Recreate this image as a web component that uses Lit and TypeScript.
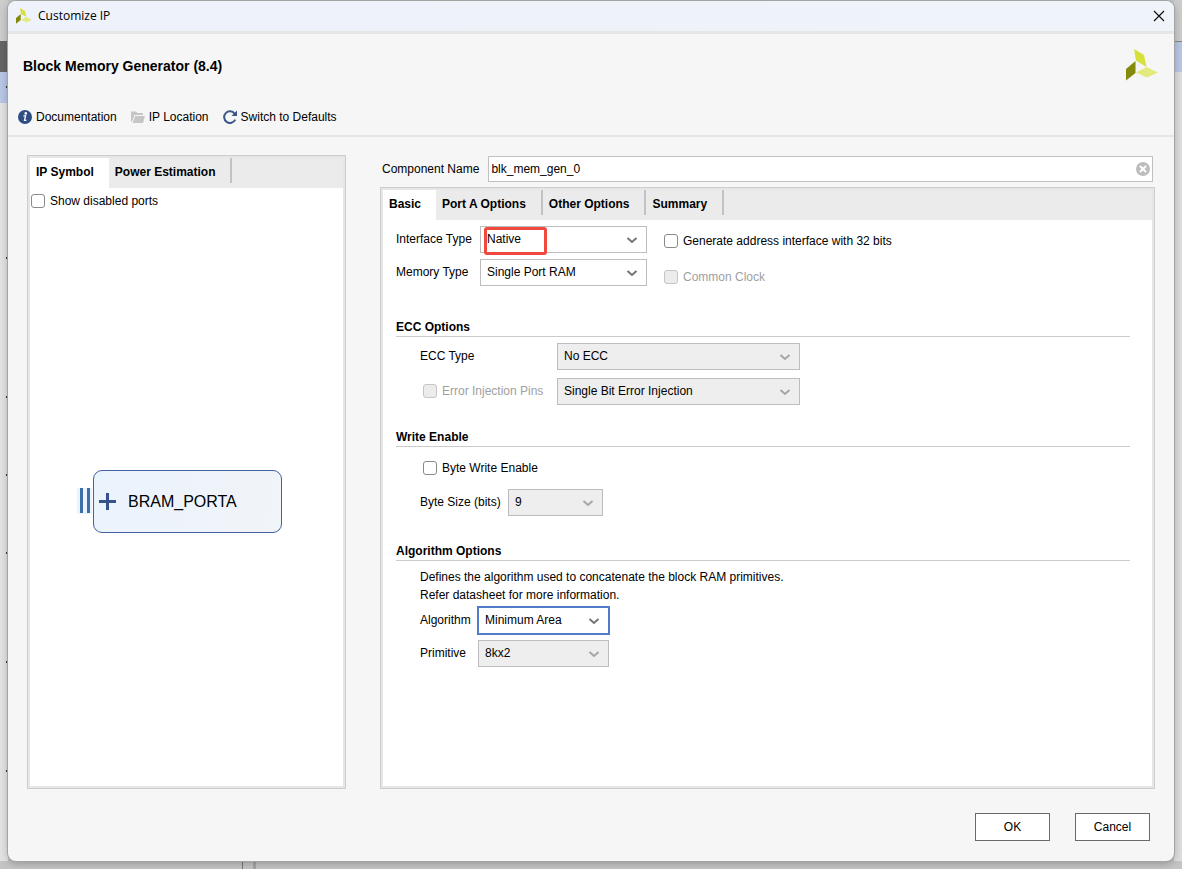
import { LitElement, html, css, nothing } from "lit";
import { customElement, property } from "lit/decorators.js";

const logo = html`<svg class="logo" viewBox="0 0 32 32" aria-hidden="true">
  <path fill="#d5e03a" d="M8 0 L18 6 L20.5 18 L10 11.5 Z" />
  <path fill="#868a0c" d="M0 20 L9.5 12 V24 L0 31.5 Z" />
  <path fill="#e3ea7c" d="M10 23.5 L20.5 18 L32 23.5 L21 28.5 Z" />
</svg>`;

@customElement("x-select")
class XSelect extends LitElement {
  @property() value = "";
  @property() label = "";
  @property({ type: Boolean }) disabled = false;
  @property({ type: Boolean, reflect: true }) active = false;
  @property({ type: Boolean }) marked = false;

  static styles = css`
    :host { display: grid; position: relative; height: 27px; }
    select {
      grid-area: 1 / 1; appearance: none; box-sizing: border-box; width: 100%; height: 27px;
      margin: 0; padding: 0 28px 2px 6px; border: 1px solid #bdbdbd; border-radius: 0;
      background: #fff; color: #000; font: 12px "Liberation Sans", Arial, sans-serif; opacity: 1;
    }
    select:disabled { background: #eee; }
    :host([active]) select { border-color: #4f7dcb; box-shadow: 0 0 0 1px #4f7dcb; }
    svg {
      grid-area: 1 / 1; justify-self: end; align-self: center; width: 12px; height: 8px;
      margin-right: 9px; fill: none; stroke: #757575; stroke-width: 2; pointer-events: none;
    }
    .off { stroke: #a6a6a6; }
    .mark {
      position: absolute; left: 4px; top: 1px; width: 63px; height: 28px; box-sizing: border-box;
      border: 3px solid #f0493e; border-radius: 3px; pointer-events: none;
    }
  `;

  render() {
    return html`
      <select aria-label=${this.label} ?disabled=${this.disabled}><option>${this.value}</option></select>
      <svg class=${this.disabled ? "off" : ""} viewBox="0 0 12 8"><path d="M1.5 2 L6 6 L10.5 2" /></svg>
      ${this.marked ? html`<span class="mark"></span>` : nothing}
    `;
  }
}

@customElement("app-root")
class AppRoot extends LitElement {
  static styles = css`
    :host {
      display: flex; box-sizing: border-box; min-height: 100vh; padding: 1px 8px 8px; overflow: hidden;
      position: relative; background: #c4c4c4; color: #000;
      font: 12px/16px "Liberation Sans", Arial, sans-serif;
    }
    h1, h2, p { margin: 0; }
    button { font: inherit; color: inherit; padding: 0; border: 0; background: none; }
    .edge { position: absolute; top: 0; bottom: 8px; width: 8px; }
    .edge.left { left: 0; background: linear-gradient(#cdcdcd 41px, #666 41px 72px, #b9c7e6 72px 103px, #e3e3e3 103px); }
    .edge.right { right: 0; background: linear-gradient(#cdcdcd 41px, #888 41px 42px, #b9c7e6 42px 72px, #dedede 72px); }
    .tick { position: absolute; left: 6px; width: 2px; height: 2px; background: #333; }
    .split { position: absolute; bottom: 0; height: 8px; left: 242px; width: 10px; border-left: 1px solid #777; border-right: 3px solid #a5a5a5; }
    .dialog {
      position: relative; flex: 1; min-width: 0; display: flex; flex-direction: column; border-radius: 8px;
      background: #f6f6f6; box-shadow: 0 0 0 1px #a4a4a4, 0 2px 8px rgba(0, 0, 0, .28);
    }
    .titlebar {
      display: flex; align-items: center; height: 30px; padding: 0 9px 0 8px; border-bottom: 3px solid #e5e5e5;
      border-radius: 8px 8px 0 0; background: linear-gradient(90deg, #eef2fb, #eef4f9);
      font: 12px/16px "Open Sans", "Noto Sans", sans-serif;
    }
    .titlebar .logo { width: 16px; height: 16px; margin-right: 6px; }
    .titlebar button { display: flex; margin-left: auto; }
    .close { width: 12px; height: 12px; stroke: #111; stroke-width: 1.2; }
    .head { display: flex; justify-content: space-between; padding: 15px 16px 0 15px; }
    h1 { font-size: 14px; line-height: 34px; font-weight: bold; }
    .head .logo { width: 32px; height: 32px; }
    .tools { display: flex; gap: 14px; padding: 25px 10px 9px; border-bottom: 2px solid #e5e5e5; }
    .tools button { display: flex; align-items: center; gap: 4px; height: 18px; }
    .tools svg { width: 14px; height: 14px; }
    .main { flex: 1; display: grid; grid-template-columns: 319px minmax(0, 1fr); gap: 34px; padding: 18px 19px 0; }
    .side, .config { display: flex; flex-direction: column; }
    .panel { flex: 1; display: flex; flex-direction: column; border: 1px solid #cdcdcd; background: #e6e6e6; padding: 2px; }
    .body { flex: 1; background: #fff; display: flex; flex-direction: column; }
    .tabs { display: flex; height: 30px; background: #ebebeb; }
    .tab { font-weight: bold; text-align: left; padding: 0 15px 2px 6px; height: 30px; }
    .tab.on { background: #fff; }
    .tab + .tab { height: 25px; padding: 3px 15px 0 6px; border-right: 2px solid #c2c2c2; }
    .check { display: flex; align-items: center; gap: 5px; }
    .check input {
      appearance: none; box-sizing: border-box; width: 14px; height: 14px; margin: 0;
      border: 1px solid #8a8a8a; border-radius: 3px; background: #fff;
    }
    .check.off { color: #a0a0a0; }
    .check.off input { border-color: #c6c6c6; background: #ececec; }
    .side .check { padding: 5px 1px; }
    .canvas { flex: 1; display: flex; align-items: center; justify-content: center; padding: 3px 0 0 2px; }
    .block {
      position: relative; box-sizing: border-box; width: 189px; height: 63px; display: flex; align-items: center;
      gap: 12px; padding-left: 5px; border: 1px solid #41639f; border-radius: 9px;
      background: linear-gradient(100deg, #ebf3fd, #f1f4f8); font-size: 16px;
    }
    .block svg { width: 17px; height: 17px; stroke: #36528c; stroke-width: 3; }
    .pins {
      position: absolute; left: -17px; top: 17px; box-sizing: border-box; width: 15px; height: 26px; background: #eaf4fd;
      padding: 0 2px 0 3px; display: flex; gap: 4px;
    }
    .pins i { width: 3px; height: 25px; background: #3d6ea5; }
    .name { display: flex; align-items: center; gap: 9px; padding: 1px 2px 5px; }
    .field { flex: 1; display: grid; align-items: center; }
    .field input {
      grid-area: 1 / 1; box-sizing: border-box; width: 100%; height: 26px; margin: 0; padding: 0 24px 0 2px;
      border: 1px solid #c0c0c0; font: inherit; background: #fff; color: #000;
    }
    .field button { grid-area: 1 / 1; justify-self: end; display: flex; margin-right: 3px; }
    .field svg { width: 14px; height: 14px; }
    .form { padding: 6px 22px 0 13px; }
    .top { display: flex; gap: 17px; margin-bottom: 31px; }
    .grid { display: grid; row-gap: 8px; align-items: center; justify-content: start; }
    .grid > span, .ecc .check { padding-bottom: 2px; }
    .types { grid-template-columns: 84px 167px; row-gap: 6px; }
    .ecc { grid-template-columns: 137px 243px; }
    .write { grid-template-columns: 88px 95px; grid-auto-rows: 27px; }
    .algo { grid-template-columns: 58px 131px; row-gap: 6px; }
    .wide { grid-column: 1 / -1; }
    .inset { padding-left: 3px; }
    .flags { display: flex; flex-direction: column; gap: 20px; padding-top: 7px; }
    h2 { font-size: 12px; line-height: 17px; padding-top: 2px; border-bottom: 1px solid #cbcbcb; }
    .section { padding: 6px 0 22px 24px; }
    .section.write { padding-top: 7px; padding-bottom: 25px; }
    .section.last { padding-top: 7px; }
    .section p { line-height: 18px; margin-bottom: 3px; }
    .foot { display: flex; justify-content: flex-end; gap: 25px; padding: 24px 24px 20px; }
    .foot button { width: 75px; height: 28px; border: 1px solid #6a6a6a; background: #fff; }
  `;

  render() {
    return html`
      <div class="edge left">
        ${[86, 257, 396, 474, 552, 661, 770].map((y) => html`<i class="tick" style="top:${y}px"></i>`)}
      </div>
      <div class="edge right"></div>
      <div class="split"></div>
      <div class="dialog" role="dialog" aria-label="Customize IP">
        <div class="titlebar">
          ${logo}<span>Customize IP</span>
          <button aria-label="Close"><svg class="close" viewBox="0 0 12 12"><path d="M1 1 L11 11 M11 1 L1 11" /></svg></button>
        </div>
        <div class="head"><h1>Block Memory Generator (8.4)</h1>${logo}</div>
        <div class="tools">
          <button>
            <svg viewBox="0 0 14 14"><circle cx="7" cy="7" r="7" fill="#2f4d85" /><circle cx="7.8" cy="3.4" r="1.3" fill="#fff" /><path d="M5.4 5.9 H7.6 L6.5 10.4 H8.4" fill="none" stroke="#fff" stroke-width="1.3" /></svg>
            Documentation
          </button>
          <button>
            <svg viewBox="0 0 14 14"><path fill="#c6c6c6" d="M0 12 V1.5 H5 L6.5 3 H12 V5 H3.5 L1.3 11 Z M4.2 6 H14 L12 13 H1.5 Z" /></svg>
            IP Location
          </button>
          <button>
            <svg viewBox="0 0 14 14"><path d="M11.6 3.6 A5.8 5.8 0 1 0 12.2 9.6" fill="none" stroke="#3a5689" stroke-width="2" /><path fill="#3a5689" d="M14 .5 V6 H8.5 Z" /></svg>
            Switch to Defaults
          </button>
        </div>
        <div class="main">
          <div class="side">
            <div class="panel">
              <div class="tabs"><button class="tab on">IP Symbol</button><button class="tab">Power Estimation</button></div>
              <div class="body">
                <label class="check"><input type="checkbox" />Show disabled ports</label>
                <div class="canvas">
                  <div class="block">
                    <span class="pins"><i></i><i></i></span>
                    <svg viewBox="0 0 17 17"><path d="M8.5 0 V17 M0 8.5 H17" /></svg>
                    BRAM_PORTA
                  </div>
                </div>
              </div>
            </div>
          </div>
          <div class="config">
            <div class="name">
              <label for="name">Component Name</label>
              <div class="field">
                <input id="name" type="text" value="blk_mem_gen_0" />
                <button aria-label="Clear"><svg viewBox="0 0 14 14"><circle cx="7" cy="7" r="7" fill="#bdbdbd" /><path d="M4 4 L10 10 M10 4 L4 10" stroke="#fff" stroke-width="2" /></svg></button>
              </div>
            </div>
            <div class="panel">
              <div class="tabs">
                <button class="tab on">Basic</button><button class="tab">Port A Options</button>
                <button class="tab">Other Options</button><button class="tab">Summary</button>
              </div>
              <div class="body"><div class="form">
                <div class="top">
                  <div class="grid types">
                    <span>Interface Type</span><x-select label="Interface Type" value="Native" marked></x-select>
                    <span>Memory Type</span><x-select label="Memory Type" value="Single Port RAM"></x-select>
                  </div>
                  <div class="flags">
                    <label class="check"><input type="checkbox" />Generate address interface with 32 bits</label>
                    <label class="check off"><input type="checkbox" disabled />Common Clock</label>
                  </div>
                </div>
                <h2>ECC Options</h2>
                <div class="section grid ecc">
                  <span>ECC Type</span><x-select label="ECC Type" value="No ECC" disabled></x-select>
                  <label class="check off inset"><input type="checkbox" disabled />Error Injection Pins</label>
                  <x-select label="Error Injection" value="Single Bit Error Injection" disabled></x-select>
                </div>
                <h2>Write Enable</h2>
                <div class="section grid write">
                  <label class="check inset wide"><input type="checkbox" />Byte Write Enable</label>
                  <span>Byte Size (bits)</span><x-select label="Byte Size (bits)" value="9" disabled></x-select>
                </div>
                <h2>Algorithm Options</h2>
                <div class="section last">
                  <p>Defines the algorithm used to concatenate the block RAM primitives.<br />Refer datasheet for more information.</p>
                  <div class="grid algo">
                    <span>Algorithm</span><x-select label="Algorithm" value="Minimum Area" active></x-select>
                    <span>Primitive</span><x-select label="Primitive" value="8kx2" disabled></x-select>
                  </div>
                </div>
              </div></div>
            </div>
          </div>
        </div>
        <div class="foot"><button>OK</button><button>Cancel</button></div>
      </div>
    `;
  }
}
